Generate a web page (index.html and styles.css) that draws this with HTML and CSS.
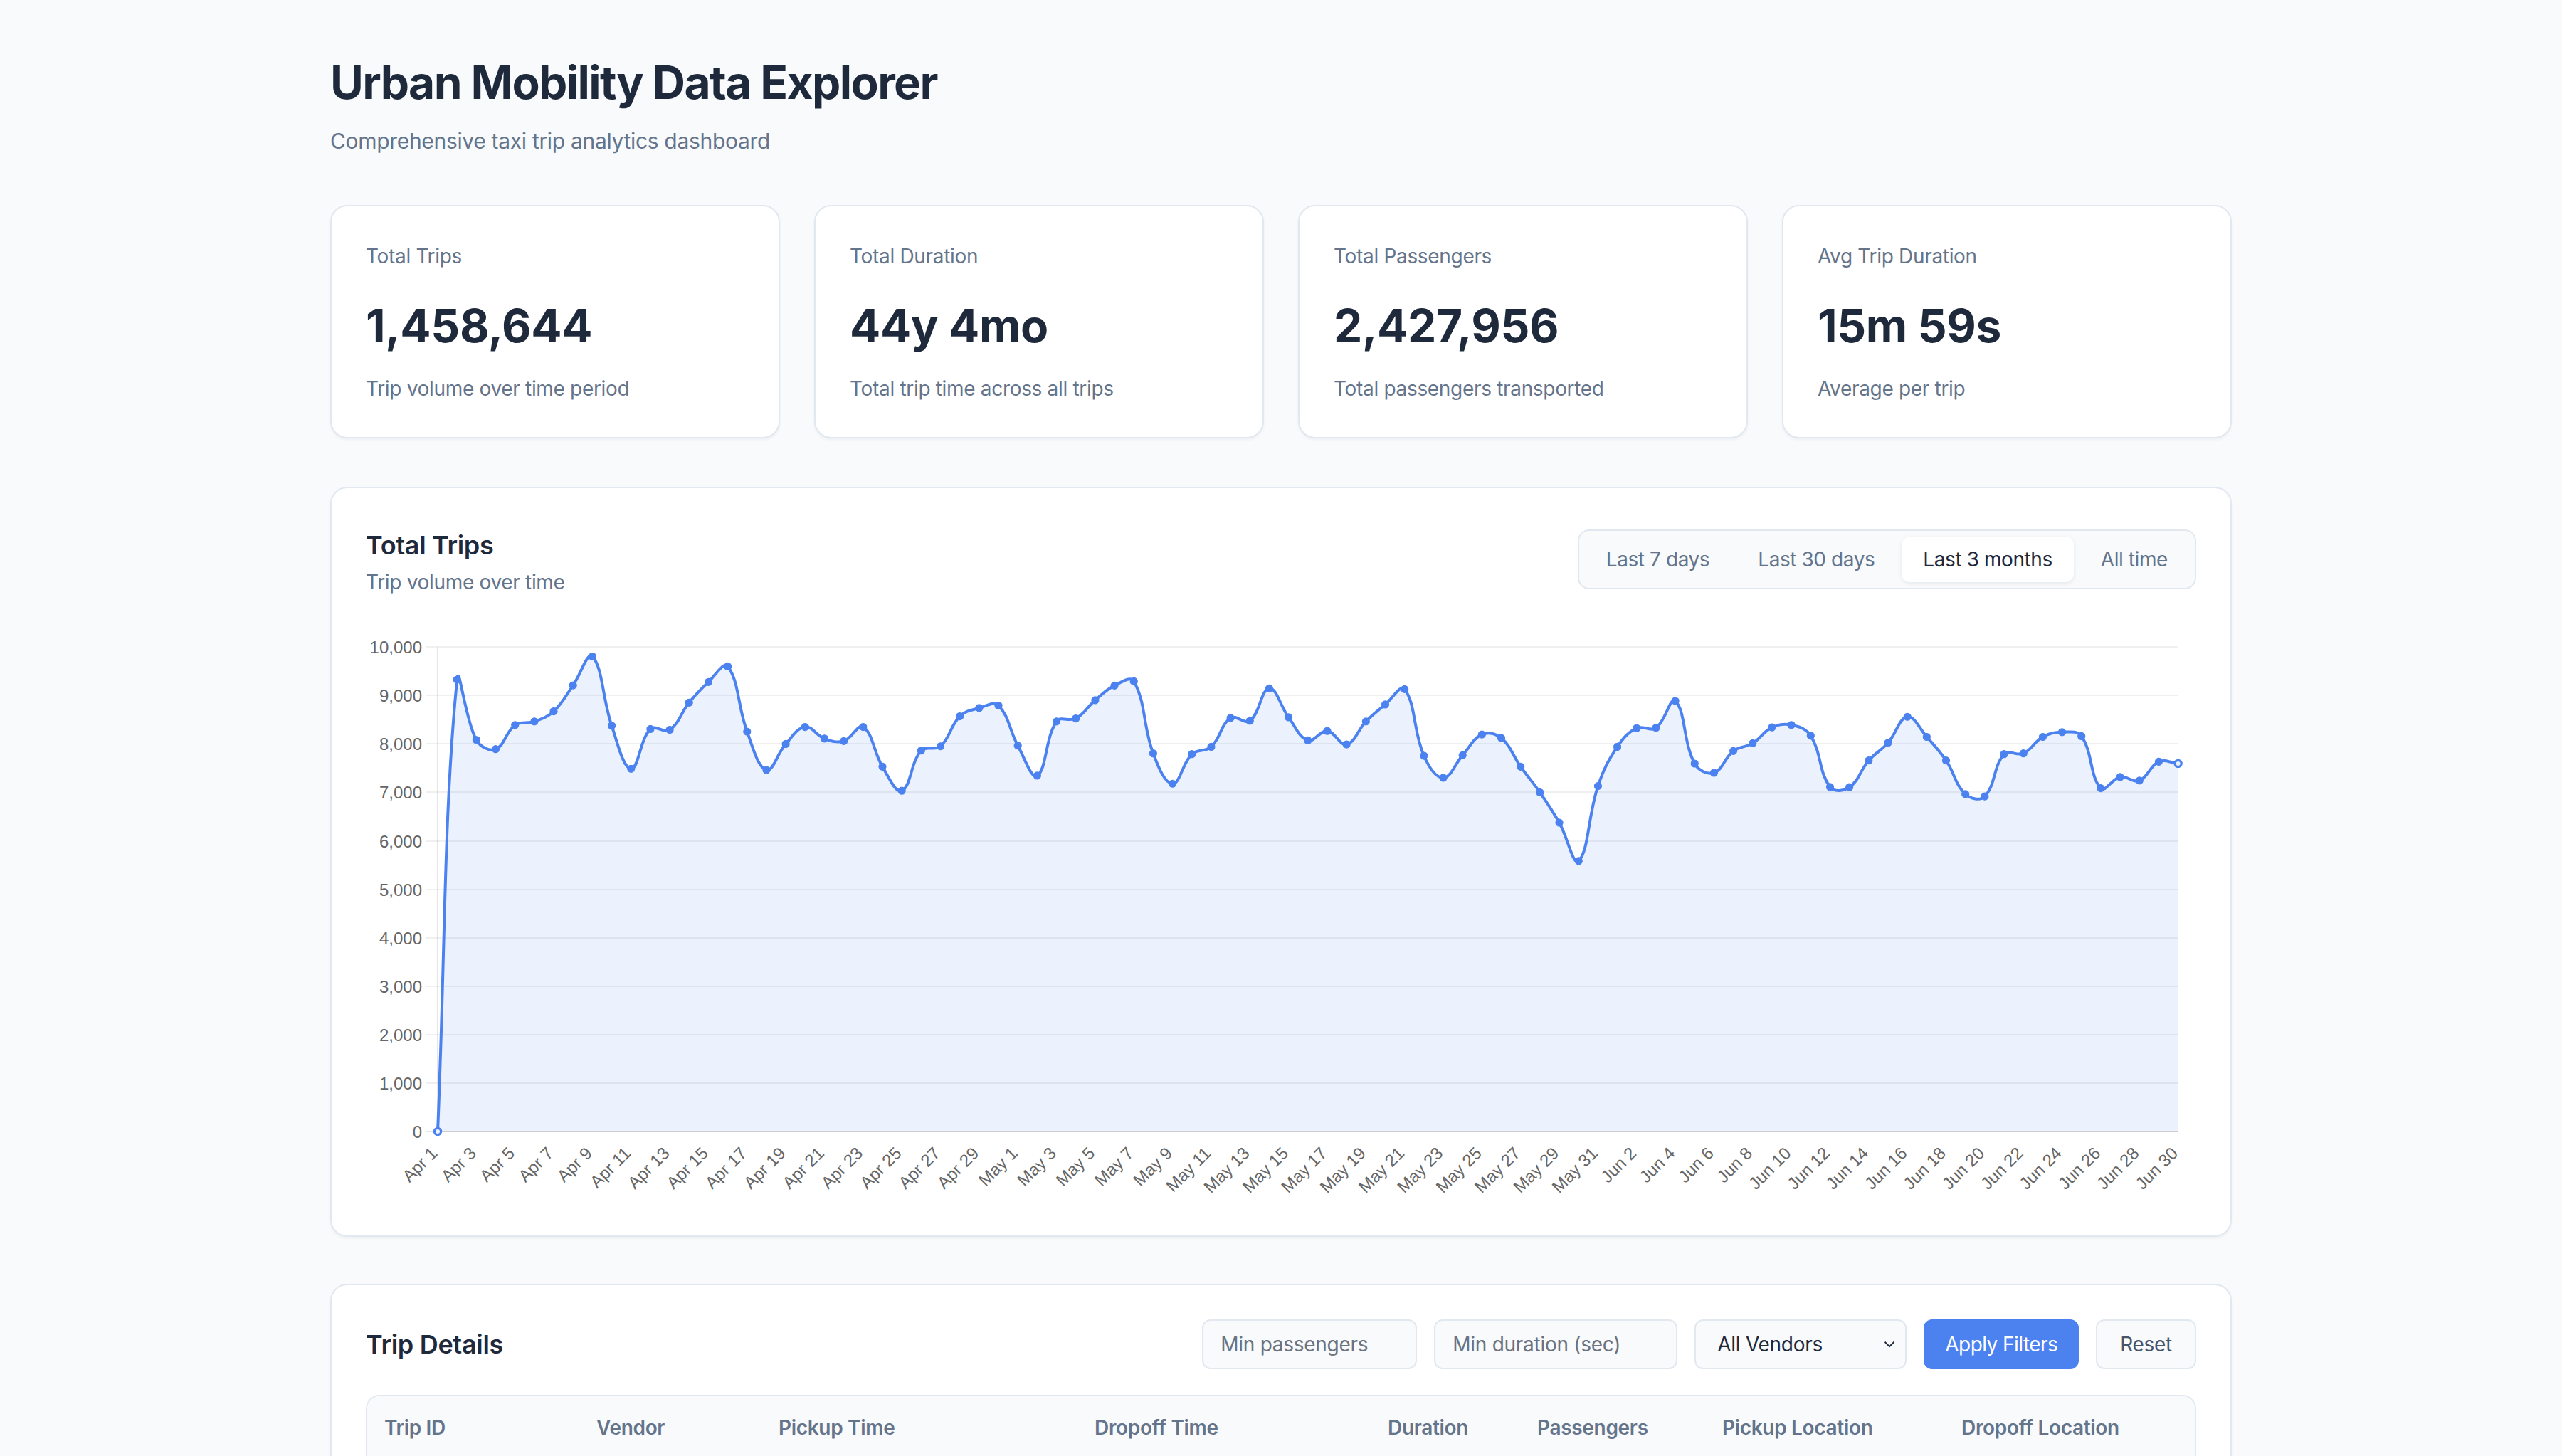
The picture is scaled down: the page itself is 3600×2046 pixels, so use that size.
FILE: index.html
```html
<!DOCTYPE html>
<html lang="en">
<head>
<meta charset="utf-8">
<title>Urban Mobility Data Explorer</title>
<link rel="stylesheet" href="styles.css">
</head>
<body>
<main class="page">
  <header class="page-header">
    <h1 class="page-title">Urban Mobility Data Explorer</h1>
    <p class="page-subtitle">Comprehensive taxi trip analytics dashboard</p>
  </header>

  <section class="stats">
    <div class="card stat">
      <div class="stat-label">Total Trips</div>
      <div class="stat-value">1,458,644</div>
      <div class="stat-desc">Trip volume over time period</div>
    </div>
    <div class="card stat">
      <div class="stat-label">Total Duration</div>
      <div class="stat-value">44y 4mo</div>
      <div class="stat-desc">Total trip time across all trips</div>
    </div>
    <div class="card stat">
      <div class="stat-label">Total Passengers</div>
      <div class="stat-value">2,427,956</div>
      <div class="stat-desc">Total passengers transported</div>
    </div>
    <div class="card stat">
      <div class="stat-label">Avg Trip Duration</div>
      <div class="stat-value">15m 59s</div>
      <div class="stat-desc">Average per trip</div>
    </div>
  </section>

  <section class="card chart-card">
    <div class="chart-head">
      <div class="head-text">
        <h2 class="card-title">Total Trips</h2>
        <p class="card-subtitle">Trip volume over time</p>
      </div>
      <div class="tabs">
        <button class="tab" type="button">Last 7 days</button>
        <button class="tab" type="button">Last 30 days</button>
        <button class="tab tab-active" type="button">Last 3 months</button>
        <button class="tab" type="button">All time</button>
      </div>
    </div>
    <svg id="trips-chart" class="chart" viewBox="0 0 1286 401" width="1286" height="401" xmlns="http://www.w3.org/2000/svg"></svg>
  </section>

  <section class="card table-card">
    <div class="table-head">
      <h2 class="card-title">Trip Details</h2>
      <div class="filters">
        <input class="field field-pass" type="number" placeholder="Min passengers">
        <input class="field field-dur" type="number" placeholder="Min duration (sec)">
        <div class="select-wrap">
          <select class="field field-vendor">
            <option>All Vendors</option>
            <option>Vendor 1</option>
            <option>Vendor 2</option>
          </select>
          <svg class="chevron" viewBox="0 0 10 6" width="10" height="6" xmlns="http://www.w3.org/2000/svg"><path d="M1 1l4 4 4-4"/></svg>
        </div>
        <button class="btn btn-primary" type="button">Apply Filters</button>
        <button class="btn btn-ghost" type="button">Reset</button>
      </div>
    </div>
    <div class="table-wrap">
      <table class="trips">
        <colgroup>
          <col class="col-id"><col class="col-vendor"><col class="col-pickup"><col class="col-dropoff">
          <col class="col-duration"><col class="col-pass"><col class="col-ploc"><col class="col-dloc">
        </colgroup>
        <thead>
          <tr>
            <th>Trip ID</th><th>Vendor</th><th>Pickup Time</th><th>Dropoff Time</th>
            <th>Duration</th><th>Passengers</th><th>Pickup Location</th><th>Dropoff Location</th>
          </tr>
        </thead>
        <tbody>
          <tr><td>id2875421</td><td>Vendor 2</td><td>Jun 30, 2016 11:42 PM</td><td>Jun 30, 2016 11:55 PM</td><td>12m 35s</td><td>1</td><td>40.7680, -73.9822</td><td>40.7656, -73.9646</td></tr>
          <tr><td>id2377394</td><td>Vendor 1</td><td>Jun 30, 2016 11:38 PM</td><td>Jun 30, 2016 11:49 PM</td><td>10m 48s</td><td>2</td><td>40.7386, -73.9804</td><td>40.7310, -73.9995</td></tr>
          <tr><td>id3858529</td><td>Vendor 2</td><td>Jun 30, 2016 11:35 PM</td><td>Jun 30, 2016 11:59 PM</td><td>23m 50s</td><td>1</td><td>40.7639, -73.9790</td><td>40.7101, -74.0053</td></tr>
          <tr><td>id3504673</td><td>Vendor 2</td><td>Jun 30, 2016 11:31 PM</td><td>Jun 30, 2016 11:38 PM</td><td>7m 9s</td><td>5</td><td>40.7199, -74.0100</td><td>40.7067, -74.0122</td></tr>
          <tr><td>id2181028</td><td>Vendor 1</td><td>Jun 30, 2016 11:27 PM</td><td>Jun 30, 2016 11:34 PM</td><td>7m 15s</td><td>1</td><td>40.7932, -73.9731</td><td>40.7825, -73.9729</td></tr>
        </tbody>
      </table>
    </div>
  </section>
</main>
<script src="script.js"></script>
</body>
</html>
```

FILE: styles.css
```css
html {
  zoom: 2;
  scrollbar-width: none;
}

* {
  box-sizing: border-box;
}

body {
  margin: 0;
  background: #f8fafc;
  color: #1e293b;
  font-family: Inter, "Noto Sans", "Liberation Sans", sans-serif;
  letter-spacing: -0.01em;
  -webkit-font-smoothing: antialiased;
}

.page {
  max-width: 1400px;
  margin: 0 auto;
  padding: 38px 32px 48px;
}

.page-title {
  margin: 0;
  font-size: 32px;
  line-height: 40px;
  font-weight: 700;
  letter-spacing: -0.025em;
  color: #1e293b;
}

.page-subtitle {
  margin: 9px 0 0;
  font-size: 15px;
  line-height: 24px;
  color: #64748b;
}

.stats {
  display: grid;
  grid-template-columns: repeat(4, 1fr);
  gap: 24px;
  margin-top: 33px;
}

.card {
  background: #ffffff;
  border: 1px solid #e2e8f0;
  border-radius: 12px;
  box-shadow: 0 1px 2px rgba(15, 23, 42, 0.05);
}

.stat {
  padding: 25px 24px 24px;
}

.stat-label {
  font-size: 14px;
  line-height: 20px;
  color: #64748b;
}

.stat-value {
  margin-top: 19px;
  font-size: 32px;
  line-height: 40px;
  font-weight: 700;
  color: #1e293b;
}

.stat-desc {
  margin-top: 14px;
  font-size: 14px;
  line-height: 20px;
  color: #64748b;
}

.chart-card {
  margin-top: 34px;
  padding: 24px;
}

.chart-head {
  display: flex;
  justify-content: space-between;
  align-items: center;
}

.card-title {
  margin: 0;
  font-size: 18px;
  line-height: 32px;
  font-weight: 600;
  color: #1e293b;
}

.card-subtitle {
  margin: 0;
  font-size: 14px;
  line-height: 20px;
  color: #64748b;
}

.tabs {
  display: flex;
  gap: 4px;
  padding: 4px;
  background: #f8fafc;
  border: 1px solid #e2e8f0;
  border-radius: 8px;
}

.tab {
  font: inherit;
  font-size: 14px;
  line-height: 20px;
  letter-spacing: -0.015em;
  padding: 6px 15px;
  border: 0;
  border-radius: 6px;
  background: transparent;
  color: #64748b;
}

.tab-active {
  background: #ffffff;
  color: #1e293b;
  box-shadow: 0 1px 3px rgba(15, 23, 42, 0.08);
}

.chart {
  display: block;
  width: 100%;
  height: 401px;
  margin-top: 24px;
  overflow: visible;
}

.grid-line {
  stroke: rgba(0, 0, 0, 0.06);
  stroke-width: 1;
}

.axis-line {
  stroke: rgba(0, 0, 0, 0.1);
  stroke-width: 1;
}

.area {
  fill: rgba(59, 130, 246, 0.1);
  stroke: none;
}

.trend {
  fill: none;
  stroke: #4b82f0;
  stroke-width: 2;
  stroke-linejoin: round;
}

.dot {
  fill: #4b82f0;
  stroke: #4b82f0;
  stroke-width: 0.6;
}

.dot-end {
  fill: #ebf2fe;
  stroke: #4b82f0;
  stroke-width: 1.6;
}

.y-label,
.x-label {
  font-family: "Liberation Sans", Arial, sans-serif;
  font-size: 12px;
  letter-spacing: 0;
  fill: #666666;
}

.table-card {
  margin-top: 33px;
  padding: 24px;
}

.table-head {
  display: flex;
  justify-content: space-between;
  align-items: center;
}

.filters {
  display: flex;
  gap: 12px;
}

.field {
  height: 35px;
  padding: 0 12px;
  border: 1px solid #e2e8f0;
  border-radius: 6px;
  background: #f8fafc;
  font: inherit;
  font-size: 14px;
  letter-spacing: -0.01em;
  color: #1e293b;
  outline: none;
}

.field::placeholder {
  color: #6b7280;
}

.field-pass {
  width: 151px;
}

.field-dur {
  width: 171px;
}

.select-wrap {
  position: relative;
}

.field-vendor {
  width: 149px;
  padding-left: 15px;
  appearance: none;
  -webkit-appearance: none;
}

.chevron {
  position: absolute;
  right: 8px;
  top: 15px;
  width: 8px;
  height: 5px;
  fill: none;
  stroke: #1e293b;
  stroke-width: 1.2;
  pointer-events: none;
}

.btn {
  height: 35px;
  padding: 0 16px;
  border-radius: 6px;
  font: inherit;
  font-size: 14px;
  letter-spacing: -0.01em;
}

.btn-primary {
  padding: 0 14px;
  letter-spacing: -0.02em;
  background: #4b82f0;
  border: 1px solid #4b82f0;
  color: #ffffff;
}

.btn-ghost {
  background: #f8fafc;
  border: 1px solid #e2e8f0;
  color: #475569;
}

.table-wrap {
  margin-top: 18px;
  border: 1px solid #e2e8f0;
  border-radius: 10px;
  overflow: hidden;
}

.trips {
  width: 100%;
  border-collapse: collapse;
  table-layout: fixed;
}

.col-id { width: 149px; }
.col-vendor { width: 128px; }
.col-pickup { width: 222px; }
.col-dropoff { width: 206px; }
.col-duration { width: 105px; }
.col-pass { width: 130px; }
.col-ploc { width: 168px; }
.col-dloc { width: 176px; }

.trips th {
  text-align: left;
  padding: 12px;
  font-size: 14px;
  line-height: 20px;
  font-weight: 600;
  color: #64748b;
  background: #f8fafc;
  border-bottom: 1px solid #e2e8f0;
}

.trips td {
  padding: 12px;
  font-size: 14px;
  line-height: 20px;
  color: #334155;
  border-bottom: 1px solid #f1f5f9;
  white-space: nowrap;
  overflow: hidden;
  text-overflow: ellipsis;
}
```

FILE: script.js
```js
(function () {
  var data = [
    0, 9327, 8082, 7892, 8390, 8463, 8673, 9209, 9805, 8375,
    7487, 8307, 8292, 8853, 9278, 9600, 8253, 7462, 7999, 8350,
    8111, 8058, 8350, 7530, 7033, 7862, 7950, 8570, 8741, 8790,
    7965, 7345, 8463, 8526, 8902, 9204, 9292, 7804, 7179, 7789,
    7940, 8536, 8477, 9146, 8550, 8072, 8267, 7990, 8463, 8814,
    9131, 7755, 7301, 7765, 8194, 8121, 7530, 6999, 6374, 5583,
    7130, 7940, 8326, 8331, 8887, 7594, 7404, 7853, 8014, 8341,
    8390, 8170, 7111, 7106, 7657, 8023, 8560, 8145, 7657, 6964,
    6916, 7789, 7804, 8145, 8243, 8160, 7086, 7316, 7243, 7633,
    7594
  ];

  var svg = document.getElementById('trips-chart');
  var NS = 'http://www.w3.org/2000/svg';
  var left = 50.5, right = 1273.3, top = 11.6, bottom = 352;
  var max = 10000;
  var months = ['Apr', 'May', 'Jun'];

  function xAt(i) { return left + (right - left) * i / (data.length - 1); }
  function yAt(v) { return bottom - (bottom - top) * v / max; }

  function el(name, attrs, text) {
    var node = document.createElementNS(NS, name);
    for (var k in attrs) node.setAttribute(k, attrs[k]);
    if (text !== undefined) node.textContent = text;
    svg.appendChild(node);
    return node;
  }

  // horizontal grid + y labels
  for (var k = 0; k <= 10; k++) {
    var y = Math.round(yAt(k * 1000) * 2) / 2;
    el('line', { x1: left - 8, x2: right, y1: y, y2: y, 'class': k === 0 ? 'axis-line' : 'grid-line' });
    el('text', { x: left - 11, y: y + 4.5, 'text-anchor': 'end', 'class': 'y-label' },
      (k * 1000).toLocaleString('en-US'));
  }
  el('line', { x1: left, x2: left, y1: top, y2: bottom, 'class': 'axis-line' });

  // spline control points (Chart.js style, tension 0.4)
  var pts = data.map(function (v, i) { return { x: xAt(i), y: yAt(v) }; });
  var t = 0.4;
  var cps = pts.map(function (cur, i) {
    var prev = pts[i - 1] || cur;
    var next = pts[i + 1] || cur;
    var d01 = Math.hypot(cur.x - prev.x, cur.y - prev.y);
    var d12 = Math.hypot(next.x - cur.x, next.y - cur.y);
    var s01 = d01 / (d01 + d12) || 0;
    var s12 = d12 / (d01 + d12) || 0;
    var fa = t * s01, fb = t * s12;
    function cap(p) {
      return { x: Math.min(Math.max(p.x, left), right), y: Math.min(Math.max(p.y, top), bottom) };
    }
    return {
      prev: cap({ x: cur.x - fa * (next.x - prev.x), y: cur.y - fa * (next.y - prev.y) }),
      next: cap({ x: cur.x + fb * (next.x - prev.x), y: cur.y + fb * (next.y - prev.y) })
    };
  });

  var d = 'M' + pts[0].x.toFixed(2) + ' ' + pts[0].y.toFixed(2);
  for (var i = 0; i < pts.length - 1; i++) {
    var a = cps[i].next, b = cps[i + 1].prev, p = pts[i + 1];
    d += ' C' + a.x.toFixed(2) + ' ' + a.y.toFixed(2) + ' ' + b.x.toFixed(2) + ' ' + b.y.toFixed(2) +
      ' ' + p.x.toFixed(2) + ' ' + p.y.toFixed(2);
  }
  var last = pts[pts.length - 1];
  el('path', { d: d + ' L' + last.x + ' ' + bottom + ' L' + pts[0].x + ' ' + bottom + ' Z', 'class': 'area' });
  el('line', { x1: left, x2: right, y1: bottom, y2: bottom, 'class': 'axis-line' });
  el('path', { d: d, 'class': 'trend' });

  pts.forEach(function (p, idx) {
    var end = idx === 0 || idx === pts.length - 1;
    el('circle', { cx: p.x, cy: p.y, r: end ? 2.3 : 2.5, 'class': end ? 'dot-end' : 'dot' });
  });

  // x labels every second day
  for (var j = 0; j < data.length; j += 2) {
    var date = new Date(2024, 3, 1 + j);
    var label = months[date.getMonth() - 3] + ' ' + date.getDate();
    var lx = xAt(j) + 0.5, ly = 368;
    el('text', {
      x: lx, y: ly, 'text-anchor': 'end', 'class': 'x-label',
      transform: 'rotate(-45 ' + lx + ' ' + ly + ')'
    }, label);
  }
})();
```
